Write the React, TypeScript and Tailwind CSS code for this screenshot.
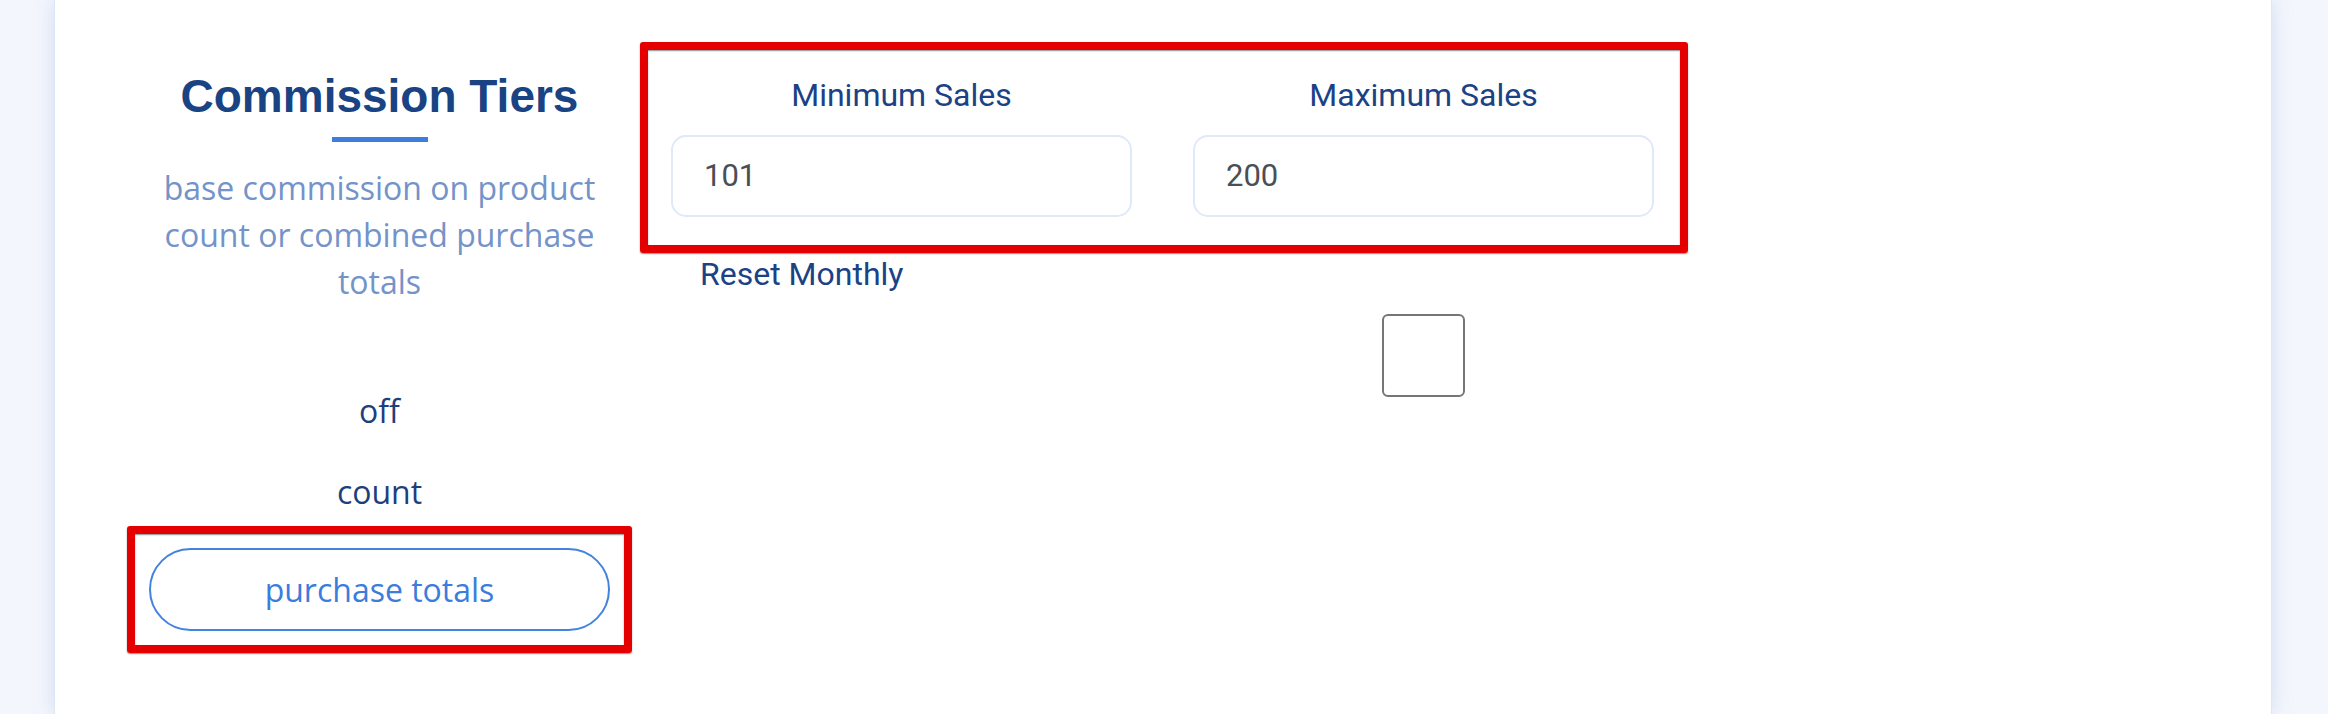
import React from "react";

const OPTIONS = ["off", "count"];

function RangeField({ label, value }: { label: string; value: string }) {
  return (
    <div className="flex w-[461px] flex-col items-center">
      <label className="font-['Roboto',sans-serif] text-[32px] leading-[37px] text-[#1b4285]">
        {label}
      </label>
      <div className="mt-[21px] flex h-[82px] w-full items-center rounded-[15px] border-2 border-[#e0e9f8] bg-white pl-[31px] font-['Roboto',sans-serif] text-[31px] text-[#4a4f56]">
        {value}
      </div>
    </div>
  );
}

export default function App() {
  return (
    <div className="flex min-h-[714px] bg-[#f3f6fc]">
      <div className="ml-[54px] flex h-[714px] w-[2218px] border-x border-[#dde6f5] bg-white pl-[71px] pt-[42px] shadow-[0_0_18px_rgba(150,175,220,0.35)]">
        {/* tier mode column */}
        <div className="flex w-[507px] flex-col items-center pt-[26px]">
          <h2 className="font-['Liberation_Sans',Arial,sans-serif] text-[46px] font-bold leading-[56px] text-[#1a4384]">
            Commission Tiers
          </h2>
          <div className="mt-[13px] h-[5px] w-[96px] bg-[#3d7ddd]" />
          <p className="mt-[22px] w-[450px] text-center font-['Open_Sans',sans-serif] text-[32px] leading-[47px] text-[#7393c9]">
            base commission on product count or combined purchase totals
          </p>

          <div className="mt-[82px] flex flex-col items-center gap-[34px]">
            {OPTIONS.map((opt) => (
              <button
                key={opt}
                className="font-['Open_Sans',sans-serif] text-[32px] leading-[47px] text-[#1d3f7c]"
              >
                {opt}
              </button>
            ))}
          </div>

          <div className="mt-[11px] rounded-[3px] border-8 border-[#e40000] p-[14px] shadow-[0_1px_1.5px_rgba(0,0,0,0.45),inset_0_1px_1.5px_rgba(0,0,0,0.45)]">
            <button className="flex h-[83px] w-[461px] items-center justify-center rounded-full border-2 border-[#4283e0] font-['Open_Sans',sans-serif] text-[32px] leading-[47px] text-[#3b7ddd]">
              purchase totals
            </button>
          </div>
        </div>

        {/* range column */}
        <div className="ml-[7px] flex flex-col">
          <div className="flex h-[211px] w-[1048px] gap-[61px] rounded-[3px] border-8 border-[#e40000] pl-[23px] pt-[27px] shadow-[0_1px_1.5px_rgba(0,0,0,0.45),inset_0_1px_1.5px_rgba(0,0,0,0.45)]">
            <RangeField label="Minimum Sales" value="101" />
            <RangeField label="Maximum Sales" value="200" />
          </div>

          <div className="mt-[3px] grid grid-cols-[461px_461px] gap-x-[61px] pl-[31px]">
            <span className="pl-[29px] font-['Roboto',sans-serif] text-[32px] leading-[37px] text-[#1b4285]">
              Reset Monthly
            </span>
            <span />
            <span />
            <div className="mt-[21px] flex justify-center">
              <div className="h-[83px] w-[83px] rounded-[6px] border-2 border-[#767676] bg-white" />
            </div>
          </div>
        </div>
      </div>
    </div>
  );
}
